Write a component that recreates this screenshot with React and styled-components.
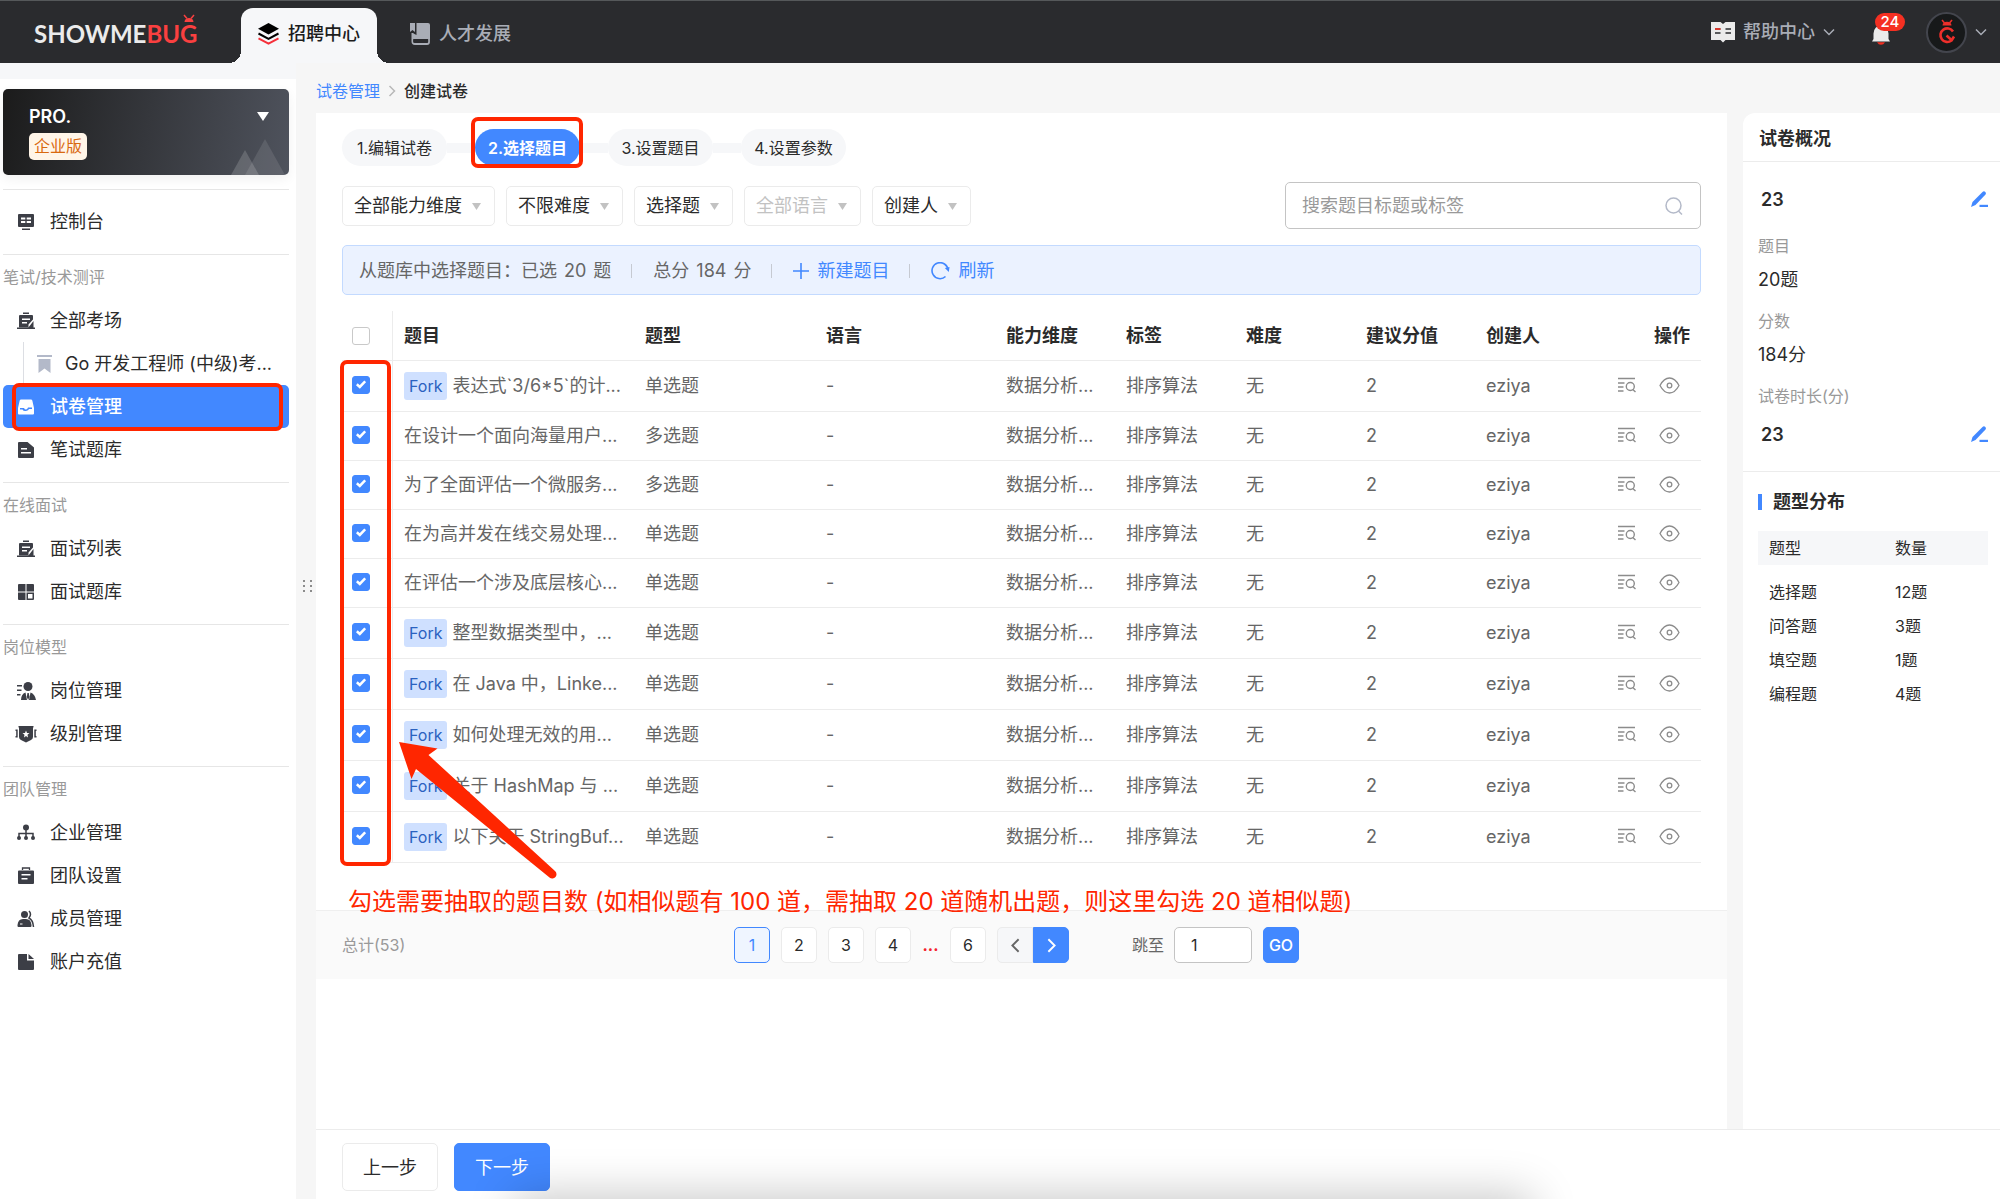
import React from 'react';
import styled, { createGlobalStyle } from 'styled-components';

const GlobalStyle = createGlobalStyle`
*{
  box-sizing: border-box;
}
body{
  margin: 0;
  background-color: #f6f6f6;
  color: #2b2b2b;
  font-family: Inter, "Noto Sans CJK SC", sans-serif;
  font-size: 18px;
  line-height: 24px;
}
button, input, select{
  font-family: inherit;
  font-size: inherit;
  line-height: inherit;
  color: inherit;
  margin: 0;
}
a{
  color: inherit;
  text-decoration: none;
}
h1, h2, p, dl, dd{
  margin: 0;
  font-size: 18px;
}
`;

const Page = styled.div`
display: flex;
flex-direction: column;
min-height: 100vh;
`;

/* ---------- header ---------- */

const Header = styled.header`
display: flex;
height: 63px;
background-color: #2a2b2e;
border-top: 1px solid #55585a;
color: #a9adb6;
`;

const Logo = styled.a`
position: relative;
width: 241px;
flex-shrink: 0;
padding: 17px 0 0 34px;
font-family: Lato, sans-serif;
font-weight: 700;
font-size: 24px;
line-height: 32px;
color: #ebebeb;
`;

const LogoRed = styled.span`
position: relative;
color: #fa4040;
`;

const LogoFeelers = styled.svg`
position: absolute;
right: 0;
top: -5px;
`;

const Tab = styled.a`
position: relative;
display: flex;
align-items: center;
gap: 9px;
margin-top: 7px;
padding: 0 17px 4px;
height: 55px;
font-weight: 500;
border-radius: 12px 12px 0 0;
background-color: ${(p) => (p.$active ? '#f6f7f9' : 'transparent')};
color: ${(p) => (p.$active ? '#1c1c1c' : '#a9adb6')};
margin-right: ${(p) => (p.$active ? '16px' : '0')};

&::before, &::after{
  content: "";
  display: ${(p) => (p.$active ? 'block' : 'none')};
  position: absolute;
  bottom: 0;
  width: 12px;
  height: 12px;
}
&::before{
  right: 100%;
  background: radial-gradient(circle at 0 0, transparent 12px, #f6f7f9 12px);
}
&::after{
  left: 100%;
  background: radial-gradient(circle at 100% 0, transparent 12px, #f6f7f9 12px);
}
`;

const HeaderRight = styled.div`
display: flex;
align-items: center;
margin-left: auto;
padding-right: 13px;
`;

const HeaderButton = styled.button`
display: flex;
align-items: center;
gap: 8px;
padding: 0;
border: none;
background: none;
font-weight: 500;
cursor: pointer;
`;

const BellButton = styled(HeaderButton)`
position: relative;
margin: 0 35px 0 36px;
padding-top: 6px;
`;

const Count = styled.span`
position: absolute;
left: 4px;
top: -6px;
width: 30px;
height: 18px;
border-radius: 9px;
background-color: #f53022;
color: white;
font-size: 15px;
line-height: 18px;
text-align: center;
`;

const Avatar = styled.span`
display: flex;
justify-content: center;
align-items: center;
width: 41px;
height: 41px;
border-radius: 50%;
border: 2px solid #43454d;
background-color: #17191a;
`;

/* ---------- sidebar ---------- */

const Body = styled.div`
display: flex;
flex: 1;
`;

const Sidebar = styled.nav`
display: flex;
flex-direction: column;
width: 296px;
flex-shrink: 0;
padding: 10px 7px 0 3px;
border-top: 16px solid #f6f7f9;
background-color: white;
`;

const Team = styled.div`
position: relative;
display: flex;
flex-direction: column;
align-items: flex-start;
gap: 4px;
height: 86px;
margin-bottom: 14px;
padding: 16px 26px 0;
border-radius: 5px;
background: linear-gradient(100deg, #1b1b1b, #4f535d);
box-shadow: 0 4px 12px rgba(0, 0, 0, 0.06);
color: white;
font-weight: 600;
`;

const TeamBadge = styled.span`
padding: 0 5px;
border-radius: 5px;
background-color: #fff5e8;
color: #d9690f;
font-size: 16px;
font-weight: 400;
line-height: 27px;
`;

const TeamArt = styled.svg`
position: absolute;
right: 0;
top: 0;
`;

const NavGroup = styled.div`
display: flex;
flex-direction: column;
padding: ${(p) => (p.$plain ? '10px 0 11px' : '0 0 11px')};
border-top: 1px solid #e6e6e6;
`;

const NavLabel = styled.div`
font-size: 16px;
line-height: 44px;
color: #999;
`;

const NavItem = styled.a`
position: relative;
display: flex;
align-items: center;
gap: 15px;
height: 43px;
padding: 1px 0 0 14px;
border-radius: 5px;
white-space: nowrap;
background-color: ${(p) => (p.$active ? '#4288ff' : 'transparent')};
color: ${(p) => (p.$active ? 'white' : '#2b2b2b')};
font-weight: ${(p) => (p.$active ? 500 : 400)};

svg{
  flex-shrink: 0;
  overflow: visible;
  color: ${(p) => (p.$active ? 'white' : '#3c3e46')};
}
`;

const NavSubItem = styled.a`
display: flex;
align-items: center;
gap: 13px;
height: 43px;
margin-left: 20px;
padding: 1px 0 0 13px;
border-left: 1px solid #dcdee3;
white-space: nowrap;
color: #2b2b2b;
`;

const Mark = styled.div`
position: absolute;
border: 4px solid #ff2600;
border-radius: 7px;
pointer-events: none;
`;

const NavMark = styled(Mark)`
top: -2px;
bottom: -3px;
left: 9px;
right: 6px;
`;

const Resizer = styled.div`
display: flex;
justify-content: center;
width: 20px;
flex-shrink: 0;
padding: 517px 0 0 3px;
`;

/* ---------- content ---------- */

const Content = styled.main`
display: flex;
flex-direction: column;
flex: 1;
min-width: 0;
`;

const Breadcrumb = styled.div`
display: flex;
align-items: center;
gap: 6px;
height: 50px;
padding-bottom: 6px;
padding-top: 12px;
font-size: 16px;
font-weight: 500;
`;

const Crumb = styled.a`
color: #4288ff;
font-weight: 400;
`;

const Columns = styled.div`
display: flex;
flex: 1;
gap: 16px;
`;

const Panel = styled.section`
flex: 1;
min-width: 0;
padding-top: 16px;
background-color: white;
`;

const PanelInner = styled.div`
padding: 0 26px;
`;

const Steps = styled.div`
display: flex;
align-items: center;
height: 37px;
font-size: 16px;
`;

const Step = styled.a`
position: relative;
width: 105px;
height: 37px;
border-radius: 19px;
line-height: 39px;
text-align: center;
white-space: nowrap;
background-color: ${(p) => (p.$active ? '#4288ff' : '#f6f7f9')};
color: ${(p) => (p.$active ? 'white' : '#2b2b2b')};
font-weight: ${(p) => (p.$active ? 600 : 400)};
`;

const StepLine = styled.div`
width: 28px;
height: 10px;
background-color: #f6f7f9;
`;

const StepMark = styled(Mark)`
top: -12px;
bottom: -2px;
left: -4px;
right: -3px;
`;

const Filters = styled.div`
display: flex;
align-items: center;
gap: 11px;
margin-top: 16px;
`;

const SelectWrap = styled.div`
position: relative;
color: #c2c2c2;

svg{
  position: absolute;
  right: 14px;
  top: 17px;
  pointer-events: none;
}
`;

const Select = styled.select`
appearance: none;
height: 40px;
padding: 0 32px 0 11px;
border: 1px solid #ebebeb;
border-radius: 5px;
background-color: white;
color: #2b2b2b;
opacity: 1;

&:disabled{
  color: #c2c2c2;
}
`;

const Search = styled.label`
display: flex;
align-items: center;
width: 416px;
height: 47px;
margin-left: auto;
padding: 0 17px 0 16px;
border: 1px solid #c4c4c4;
border-radius: 5px;
color: #b4bac9;
`;

const SearchInput = styled.input`
flex: 1;
min-width: 0;
padding: 0;
border: none;
outline: none;
color: #2b2b2b;

&::placeholder{
  color: #999;
  opacity: 1;
}
`;

const Summary = styled.div`
display: flex;
align-items: center;
height: 50px;
margin-top: 16px;
padding: 1px 0 0 16px;
border: 1px solid #c3daff;
border-radius: 5px;
background-color: #ebf2ff;
color: #666;
`;

const Num = styled.span`
margin: 0 7px;
`;

const Divider = styled.span`
width: 1px;
height: 14px;
margin: 0 21px 0 20px;
background-color: #c6cad2;
`;

const LinkButton = styled.button`
display: flex;
align-items: center;
gap: 8px;
padding: 0;
border: none;
background: none;
color: #4288ff;
cursor: pointer;
`;

const TableWrap = styled.div`
position: relative;
margin-top: 16px;
`;

const Table = styled.table`
width: 100%;
table-layout: fixed;
border-collapse: separate;
border-spacing: 0;
`;

const Th = styled.th`
height: 50px;
padding: 0 11px;
border-bottom: 1px solid #ececec;
font-weight: 600;
text-align: ${(p) => p.$align || 'left'};
`;

const Row = styled.tr`
height: ${(p) => (p.$tall ? '51px' : '49px')};
`;

const Td = styled.td`
padding: 0 11px;
border-bottom: 1px solid #ececec;
color: #666;
white-space: nowrap;
`;

const CheckTh = styled(Th)`
padding: 0 0 0 10px;
border-right: 1px solid #ececec;
`;

const CheckTd = styled(Td)`
padding: 0 0 2px 10px;
border-right: 1px solid #ececec;
`;

const CheckLabel = styled.label`
position: relative;
display: block;
width: 18px;
height: 18px;

svg{
  position: absolute;
  left: 4px;
  top: 4px;
  pointer-events: none;
}
`;

const Checkbox = styled.input`
appearance: none;
display: block;
width: 18px;
height: 18px;
margin: 0;
border: 1px solid #c9c9c9;
border-radius: 3px;
background-color: white;

&:checked{
  border-color: #4288ff;
  background-color: #4288ff;
}
`;

const Fork = styled.span`
display: inline-block;
margin-right: 5px;
padding: 0 5px;
border-radius: 3px;
background-color: #cfe0ff;
color: #2a62c0;
font-size: 16px;
line-height: 28px;
`;

const Actions = styled.div`
display: flex;
justify-content: flex-end;
gap: 22px;
padding-right: 10px;
`;

const IconButton = styled.button`
display: flex;
padding: 0;
border: none;
background: none;
color: ${(p) => (p.$blue ? '#4288ff' : '#8c8c8c')};
cursor: pointer;
`;

const TableMark = styled(Mark)`
top: 49px;
bottom: -3px;
left: -2px;
width: 51px;
`;

const Arrow = styled.svg`
position: absolute;
left: 57px;
top: 431px;
pointer-events: none;
`;

const Note = styled.p`
position: absolute;
left: 6px;
top: 573px;
font-size: 24px;
line-height: 36px;
white-space: nowrap;
color: #ff2600;
`;

const Pager = styled.div`
display: flex;
align-items: center;
height: 69px;
margin-top: 47px;
padding: 0 36px 0 26px;
border-top: 1px solid #efefef;
background-color: #fafafa;
font-size: 16px;
`;

const Total = styled.span`
flex: 1;
color: #999;
`;

const Pages = styled.div`
display: flex;
align-items: center;
gap: 11px;
`;

const PageButton = styled.button`
width: 36px;
height: 36px;
padding: 0;
border: 1px solid ${(p) => (p.$active ? '#4288ff' : '#ebebeb')};
border-radius: 5px;
background-color: ${(p) => (p.$active ? '#eff5ff' : 'white')};
color: ${(p) => (p.$active ? '#4288ff' : '#2b2b2b')};
`;

const Dots = styled.span`
width: 17px;
font-weight: 700;
text-align: center;
color: #f5222d;
`;

const Arrows = styled.div`
display: flex;
`;

const ArrowButton = styled.button`
display: flex;
justify-content: center;
align-items: center;
width: 36px;
height: 36px;
padding: 0;
border: 1px solid ${(p) => (p.$next ? '#4288ff' : '#ebebeb')};
border-radius: ${(p) => (p.$next ? '0 5px 5px 0' : '5px 0 0 5px')};
background-color: ${(p) => (p.$next ? '#4288ff' : '#f6f7f9')};
color: ${(p) => (p.$next ? 'white' : '#666')};
`;

const Jump = styled.label`
display: flex;
align-items: center;
gap: 10px;
margin-left: 52px;
color: #666;
`;

const JumpInput = styled.input`
width: 78px;
height: 36px;
padding: 0 16px;
border: 1px solid #c4c4c4;
border-radius: 5px;
background-color: white;
color: #2b2b2b;
`;

const GoButton = styled(PageButton)`
border-color: #4288ff;
background-color: #4288ff;
color: white;
font-weight: 500;
`;

const Spacer = styled.span`
flex: 1;
`;

/* ---------- overview ---------- */

const Aside = styled.aside`
width: 257px;
flex-shrink: 0;
border-top-left-radius: 12px;
background-color: white;
`;

const AsideTitle = styled.h1`
padding: 3px 16px 0;
border-bottom: 1px solid #ececec;
font-weight: 600;
line-height: 45px;
`;

const Facts = styled.dl`
padding: 15px 12px 14px 15px;
border-bottom: 1px solid #ececec;
`;

const FactLabel = styled.dt`
font-size: 16px;
line-height: 32px;
padding-top: 8px;
color: #999;
`;

const FactValue = styled.dd`
display: flex;
justify-content: space-between;
align-items: center;
height: ${(p) => (p.$editable ? '45px' : '35px')};
padding-left: ${(p) => (p.$editable ? '3px' : '0')};
font-weight: ${(p) => (p.$editable ? 600 : 400)};
`;

const TypeTitle = styled.h2`
display: flex;
align-items: center;
gap: 11px;
margin: 18px 0 17px 15px;
font-weight: 600;

&::before{
  content: "";
  width: 4px;
  height: 16px;
  background-color: #4288ff;
}
`;

const TypeTable = styled.table`
width: 230px;
margin-left: 15px;
table-layout: fixed;
border-spacing: 0;
font-size: 16px;

th{
  height: 34px;
  padding: 0 11px;
  background-color: #f6f7f9;
  font-weight: 400;
  text-align: left;
}
td{
  height: 34px;
  padding: 0 11px;
}
tbody::before{
  content: "";
  display: block;
  height: 10px;
}
`;

/* ---------- footer ---------- */

const Footer = styled.footer`
position: relative;
display: flex;
gap: 16px;
padding: 13px 26px 8px;
border-top: 1px solid #ececec;
background-color: white;
overflow: hidden;

&::after{
  content: "";
  position: absolute;
  top: 100%;
  left: 12%;
  right: 28%;
  height: 60px;
  box-shadow: 0 0 46px 4px rgba(0, 0, 0, 0.22);
  pointer-events: none;
}
`;

const FooterButton = styled.button`
width: 96px;
height: 48px;
padding: 2px 0 0;
border: 1px solid ${(p) => (p.$primary ? '#4288ff' : '#ebebeb')};
border-radius: 5px;
background-color: ${(p) => (p.$primary ? '#4288ff' : 'white')};
color: ${(p) => (p.$primary ? 'white' : '#2b2b2b')};
`;

/* ---------- icons ---------- */

const Svg = ({ size = 18, children, ...rest }) => (
    <svg width={size} height={size} viewBox="0 0 18 18" fill="currentColor" aria-hidden="true" {...rest}>
        {children}
    </svg>
);

const icons = {
    console: (
        <Svg>
            <path fillRule="evenodd" d="M2 1h14q1 0 1 1v11q0 1-1 1H2q-1 0-1-1V2q0-1 1-1zM4 4.500v2h4.300v-2zM9.700 4.500v2H14v-2zM4 8v2h4.300V8zM9.700 8v2H14V8z" />
            <path d="M5 15.500h8V17H5z" />
        </Svg>
    ),
    exam: (
        <Svg>
            <path d="M6 .5h6V2H6zM0 15.500h18V17H0z" />
            <path fillRule="evenodd" d="M3 3h12q1 0 1 1v3.500L11.500 12.500V15.500H2V4q0-1 1-1zM5 6.500V8h8V6.500zM5 10v1.500h5V10z" />
            <path d="M16.500 9v7h-5.500z" />
        </Svg>
    ),
    paper: (
        <Svg>
            <path fillRule="evenodd" d="M4 1.500h10q1 0 1.300 1L17 10v5.500q0 1-1 1H2q-1 0-1-1V10l1.700-7.500q.3-1 1.300-1zM3 10v1.500h2.500q1 2 3.500 1.500t3-2H15V9.500h-4q-.6 2-2 2T7 10z" />
        </Svg>
    ),
    bank: (
        <Svg>
            <path fillRule="evenodd" d="M2 1h8.500L17 6.500V16q0 1-1 1H2q-1 0-1-1V2q0-1 1-1zM4 7v1.500h6V7zM4 11v1.500h10V11z" />
        </Svg>
    ),
    grid: (
        <Svg>
            <path fillRule="evenodd" d="M2 1h6.500v7.500H1V2q0-1 1-1zM9.500 1H16q1 0 1 1v6.500H9.500zM1 9.500h7.500V17H2q-1 0-1-1zM9.500 9.500H17V16q0 1-1 1H9.500zM11 11v4.500h4.500V11z" />
        </Svg>
    ),
    post: (
        <Svg>
            <circle cx="11" cy="4.500" r="4.500" />
            <path d="M0 3h5v1.500H0zM0 7.500h4.500V9H0zM0 12h3.500v1.500H0z" />
            <path d="M8.500 10.500 10 18H4q0-6 4.500-7.500zM13.500 10.500 12 18h7q-1-6-5.500-7.500zM10.400 11h1.400l.6 4-1.300 3-1.300-3z" />
        </Svg>
    ),
    level: (
        <Svg>
            <path fillRule="evenodd" d="M1.500 1h15v1.500H16V12q0 2-2 3l-5 2.500L4 15q-2-1-2-3V2.500h-.5zM9 5.500 8 8H5.500l2 1.800L7 12.500l2-1.400 2 1.400-.5-2.700 2-1.800H10z" />
            <path d="M-1.500 4.500h2.200v8h-2.200V11h.7V6h-.7zM17.300 4.500h2.200V6h-.7v5h.7v1.500h-2.200z" />
        </Svg>
    ),
    org: (
        <Svg>
            <circle cx="9" cy="3.500" r="3" />
            <circle cx="2" cy="14" r="2" />
            <circle cx="9" cy="14" r="2" />
            <circle cx="16" cy="14" r="2" />
            <path d="M2 13V9.500h14V13M9 5v9" fill="none" stroke="currentColor" strokeWidth="1.500" />
        </Svg>
    ),
    team: (
        <Svg>
            <path d="M5.500 3V1h7v2" fill="none" stroke="currentColor" strokeWidth="1.300" />
            <path fillRule="evenodd" d="M2 3.500h14q1 0 1 1V16q0 1-1 1H2q-1 0-1-1V4.500q0-1 1-1zM4.500 7v1.500h9V7zM4.500 11v1.500h6V11z" />
        </Svg>
    ),
    member: (
        <Svg>
            <circle cx="7.500" cy="4.500" r="3.500" />
            <path fillRule="evenodd" d="M6 9h3q5 0 5.500 6v1q0 1-1 1h-12q-1 0-1-1v-1Q1 9 6 9zM3 14.500h2.500v-1H3z" />
            <path d="M12 1q3 3 0 7 4 2 4.500 9" fill="none" stroke="currentColor" strokeWidth="1.500" />
        </Svg>
    ),
    bill: (
        <Svg>
            <path d="M2 1h8v6.500h7V16q0 1-1 1H2q-1 0-1-1V2q0-1 1-1z" />
            <path d="M11.500 1 17 6h-5.500z" />
        </Svg>
    ),
};

const BookmarkIcon = () => (
    <svg width="15" height="18" viewBox="0 0 15 18" fill="#b3b9c9" aria-hidden="true">
        <path d="M0 0h15v2H0zM1.500 4h12v14l-6-4.500-6 4.500z" />
    </svg>
);

const LayersIcon = () => (
    <svg width="21" height="22" viewBox="0 0 21 22" fill="none" aria-hidden="true">
        <path d="M10.500 0 21 5.700 10.500 11.500 0 5.700z" fill="black" />
        <path d="M.5 10.500l10 5.300 10-5.300" stroke="black" strokeWidth="2" />
        <path d="M.5 15.300l10 5.300 10-5.300" stroke="#f5303a" strokeWidth="2" />
    </svg>
);

const BookIcon = () => (
    <svg width="20" height="22" viewBox="0 0 20 22" fill="#a9adb6" aria-hidden="true">
        <path d="M6.500 0H18q2 0 2 2v14H3.500q-1 0-1-1v-5L6.500 12z" />
        <path d="M0 0h5v9L2.500 7 0 9z" />
        <path d="M2.400 10v8.500q0 2.500 2.500 2.500H17q2 0 2-2v-5" fill="none" stroke="#a9adb6" strokeWidth="1.800" />
        <path d="M3.300 16.500h14.800v3H3.300z" fill="#2a2b2e" />
    </svg>
);

const HelpIcon = () => (
    <svg width="24" height="22" viewBox="0 0 24 22" aria-hidden="true">
        <path d="M0 1h9.500L12 3l2.500-2H24v18h-9.500L12 21.500 9.500 19H0z" fill="#ebebeb" />
        <path d="M4 8h5.500M14.500 8H20M14.500 12H20M4 12h5.500" stroke="#2a2b2e" strokeWidth="1.600" />
        <path d="M4 8h5.500" stroke="#f53022" strokeWidth="1.600" />
    </svg>
);

const BellIcon = () => (
    <svg width="20" height="20" viewBox="0 0 20 20" aria-hidden="true">
        <path d="M2.500 14V8.500a7 7.500 0 0 1 15 0V14l1.500 2.500H1z" fill="#ebebeb" />
        <path d="M6 17.200h8q-1.500 2.600-4 2.600t-4-2.600z" fill="#f53022" />
    </svg>
);

const BugIcon = () => (
    <svg width="18" height="26" viewBox="0 0 18 26" fill="none" stroke="#ee2f2b" aria-hidden="true">
        <path d="M4 1l2.500 3M14 1l-2.500 3" strokeWidth="1.500" />
        <path d="M4.500 6.500a4.500 3.800 0 0 1 9 0z" fill="#ee2f2b" stroke="none" />
        <path d="M15 12.500A6.800 6.800 0 1 0 13.500 21.500L16 17.500" strokeWidth="2.600" />
        <path d="M8.500 16.500l5 4.500" strokeWidth="2.600" />
    </svg>
);

const Chevron = ({ dir = 'down', width = 12, color = 'currentColor', stroke = 1.5 }) => {
    const paths = { down: 'M1 3.500l5 5 5-5', right: 'M3.500 1l5 5-5 5', left: 'M8.500 1l-5 5 5 5' };
    return (
        <svg width={width} height={width} viewBox="0 0 12 12" fill="none" stroke={color} strokeWidth={stroke} aria-hidden="true">
            <path d={paths[dir]} />
        </svg>
    );
};

const Caret = () => (
    <svg width="9" height="7" viewBox="0 0 9 7" fill="currentColor" aria-hidden="true">
        <path d="M0 0h9L4.500 7z" />
    </svg>
);

const ViewIcon = () => (
    <svg width="19" height="16" viewBox="0 0 19 16" fill="none" stroke="currentColor" strokeWidth="1.400" aria-hidden="true">
        <path d="M0 1.500h17M0 6h6.500M0 10h5.500M0 14h5.500" />
        <circle cx="12.300" cy="9.500" r="4" />
        <path d="M14.800 12.500l2.700 2.500" />
    </svg>
);

const EyeIcon = () => (
    <svg width="21" height="18" viewBox="0 0 21 18" fill="none" stroke="currentColor" strokeWidth="1.300" aria-hidden="true">
        <path d="M1 8.500Q5 1 10.500 1T20 8.500Q16 16 10.500 16T1 8.500z" />
        <circle cx="10.500" cy="8.500" r="2.300" />
    </svg>
);

const EditIcon = () => (
    <svg width="17" height="17" viewBox="0 0 17 17" fill="currentColor" aria-hidden="true">
        <path d="M11.500 1q1.500-1.300 2.800 0t0 2.800L4.500 14 0 16l1.500-5z" />
        <path d="M8.500 13.800H17V16H8.500z" />
    </svg>
);

/* ---------- data ---------- */

const navGroups = [
    { items: [{ icon: 'console', text: '控制台' }] },
    {
        label: '笔试/技术测评',
        items: [
            { icon: 'exam', text: '全部考场' },
            { sub: true, text: 'Go 开发工程师 (中级)考...' },
            { icon: 'paper', text: '试卷管理', active: true },
            { icon: 'bank', text: '笔试题库' },
        ],
    },
    {
        label: '在线面试',
        items: [
            { icon: 'exam', text: '面试列表' },
            { icon: 'grid', text: '面试题库' },
        ],
    },
    {
        label: '岗位模型',
        items: [
            { icon: 'post', text: '岗位管理' },
            { icon: 'level', text: '级别管理' },
        ],
    },
    {
        label: '团队管理',
        items: [
            { icon: 'org', text: '企业管理' },
            { icon: 'team', text: '团队设置' },
            { icon: 'member', text: '成员管理' },
            { icon: 'bill', text: '账户充值' },
        ],
    },
];

const steps = ['1.编辑试卷', '2.选择题目', '3.设置题目', '4.设置参数'];

const filters = [
    { text: '全部能力维度' },
    { text: '不限难度' },
    { text: '选择题' },
    { text: '全部语言', disabled: true },
    { text: '创建人' },
];

const columns = [51, 241, 181, 180, 120, 120, 120, 120, 120, 106];

const questions = [
    { fork: true, title: '表达式`3/6*5`的计...', type: '单选题' },
    { title: '在设计一个面向海量用户...', type: '多选题' },
    { title: '为了全面评估一个微服务...', type: '多选题' },
    { title: '在为高并发在线交易处理...', type: '单选题' },
    { title: '在评估一个涉及底层核心...', type: '单选题' },
    { fork: true, title: '整型数据类型中，...', type: '单选题' },
    { fork: true, title: '在 Java 中，Linke...', type: '单选题' },
    { fork: true, title: '如何处理无效的用...', type: '单选题' },
    { fork: true, title: '关于 HashMap 与 ...', type: '单选题' },
    { fork: true, title: '以下关于 StringBuf...', type: '单选题' },
];

const distribution = [
    ['选择题', '12题'],
    ['问答题', '3题'],
    ['填空题', '1题'],
    ['编程题', '4题'],
];

/* ---------- parts ---------- */

const TopBar = () => (
    <Header>
        <Logo href="#">
            SHOWME<LogoRed>BUG
                <LogoFeelers width="16" height="14" viewBox="0 0 16 14" fill="none" stroke="#fa4040" strokeWidth="1.500">
                    <path d="M3 1l3 3.500M13 1l-3 3.500" />
                    <path d="M3.500 8a4.500 4 0 0 1 9 0z" fill="#fa4040" stroke="none" />
                </LogoFeelers>
            </LogoRed>
        </Logo>
        <Tab href="#" $active><LayersIcon />招聘中心</Tab>
        <Tab href="#"><BookIcon />人才发展</Tab>
        <HeaderRight>
            <HeaderButton><HelpIcon />帮助中心<Chevron /></HeaderButton>
            <BellButton aria-label="通知"><BellIcon /><Count>24</Count></BellButton>
            <HeaderButton aria-label="账户"><Avatar><BugIcon /></Avatar><Chevron /></HeaderButton>
        </HeaderRight>
    </Header>
);

const SideNav = () => (
    <Sidebar>
        <Team>
            PRO.
            <TeamBadge>企业版</TeamBadge>
            <TeamArt width="60" height="86" viewBox="0 0 60 86" aria-hidden="true">
                <path d="M28 23h12l-6 9z" fill="white" />
                <path d="M36 50 56 86H16z" fill="white" fillOpacity="0.1" />
                <path d="M16 61 30 86H2z" fill="white" fillOpacity="0.16" />
            </TeamArt>
        </Team>
        {navGroups.map((group, i) => (
            <NavGroup key={i} $plain={!group.label}>
                {group.label && <NavLabel>{group.label}</NavLabel>}
                {group.items.map((item) =>
                    item.sub ? (
                        <NavSubItem href="#" key={item.text}><BookmarkIcon />{item.text}</NavSubItem>
                    ) : (
                        <NavItem href="#" key={item.text} $active={item.active}>
                            {icons[item.icon]}
                            {item.text}
                            {item.active && <NavMark />}
                        </NavItem>
                    )
                )}
            </NavGroup>
        ))}
    </Sidebar>
);

const Check = ({ label, checked }) => (
    <CheckLabel>
        <Checkbox type="checkbox" defaultChecked={checked} aria-label={label} />
        {checked && (
            <svg width="10" height="9" viewBox="0 0 10 9" fill="none" stroke="white" strokeWidth="2.600" aria-hidden="true">
                <path d="M.8 4.300l3 2.700L9.200 1.300" />
            </svg>
        )}
    </CheckLabel>
);

const QuestionTable = () => (
    <TableWrap>
        <Table>
            <colgroup>
                {columns.map((w, i) => <col key={i} width={w} />)}
            </colgroup>
            <thead>
                <tr>
                    <CheckTh><Check label="全选" /></CheckTh>
                    <Th>题目</Th>
                    <Th>题型</Th>
                    <Th>语言</Th>
                    <Th>能力维度</Th>
                    <Th>标签</Th>
                    <Th>难度</Th>
                    <Th>建议分值</Th>
                    <Th>创建人</Th>
                    <Th $align="right">操作</Th>
                </tr>
            </thead>
            <tbody>
                {questions.map((q) => (
                    <Row key={q.title} $tall={q.fork}>
                        <CheckTd><Check label={q.title} checked /></CheckTd>
                        <Td>{q.fork && <Fork>Fork</Fork>}{q.title}</Td>
                        <Td>{q.type}</Td>
                        <Td>-</Td>
                        <Td>数据分析...</Td>
                        <Td>排序算法</Td>
                        <Td>无</Td>
                        <Td>2</Td>
                        <Td>eziya</Td>
                        <Td>
                            <Actions>
                                <IconButton aria-label="详情"><ViewIcon /></IconButton>
                                <IconButton aria-label="预览"><EyeIcon /></IconButton>
                            </Actions>
                        </Td>
                    </Row>
                ))}
            </tbody>
        </Table>
        <TableMark />
        <Arrow width="158" height="140" viewBox="0 0 158 140" fill="#ff2600" aria-hidden="true">
            <path d="M0 0l38.500 6.500-9 6.500L156 129a4 4 0 0 1-5.500 6.500L17 27l-4.500 10z" />
        </Arrow>
        <Note>勾选需要抽取的题目数 (如相似题有 100 道，需抽取 20 道随机出题，则这里勾选 20 道相似题)</Note>
    </TableWrap>
);

const Pagination = () => (
    <Pager>
        <Total>总计(53)</Total>
        <Pages>
            <PageButton $active>1</PageButton>
            <PageButton>2</PageButton>
            <PageButton>3</PageButton>
            <PageButton>4</PageButton>
            <Dots>...</Dots>
            <PageButton>6</PageButton>
            <Arrows>
                <ArrowButton aria-label="上一页"><Chevron dir="left" width={15} /></ArrowButton>
                <ArrowButton aria-label="下一页" $next><Chevron dir="right" width={15} /></ArrowButton>
            </Arrows>
            <Jump>
                跳至
                <JumpInput defaultValue="1" />
            </Jump>
            <GoButton>GO</GoButton>
        </Pages>
        <Spacer />
    </Pager>
);

const Overview = () => (
    <Aside>
        <AsideTitle>试卷概况</AsideTitle>
        <Facts>
            <FactValue $editable>23<IconButton $blue aria-label="编辑名称"><EditIcon /></IconButton></FactValue>
            <FactLabel>题目</FactLabel>
            <FactValue>20题</FactValue>
            <FactLabel>分数</FactLabel>
            <FactValue>184分</FactValue>
            <FactLabel>试卷时长(分)</FactLabel>
            <FactValue $editable>23<IconButton $blue aria-label="编辑时长"><EditIcon /></IconButton></FactValue>
        </Facts>
        <TypeTitle>题型分布</TypeTitle>
        <TypeTable>
            <colgroup>
                <col width="126" />
                <col />
            </colgroup>
            <thead>
                <tr><th>题型</th><th>数量</th></tr>
            </thead>
            <tbody>
                {distribution.map(([type, count]) => (
                    <tr key={type}><td>{type}</td><td>{count}</td></tr>
                ))}
            </tbody>
        </TypeTable>
    </Aside>
);

const App = () => {
    return (
        <Page>
            <GlobalStyle />
            <TopBar />
            <Body>
                <SideNav />
                <Resizer>
                    <svg width="10" height="12" viewBox="0 0 10 12" fill="#8c8c8c" aria-hidden="true">
                        <path d="M0 0h2v2H0zM7 0h2v2H7zM0 5h2v2H0zM7 5h2v2H7zM0 10h2v2H0zM7 10h2v2H7z" />
                    </svg>
                </Resizer>
                <Content>
                    <Breadcrumb>
                        <Crumb href="#">试卷管理</Crumb>
                        <Chevron dir="right" width={12} color="#b8b8b8" />
                        创建试卷
                    </Breadcrumb>
                    <Columns>
                        <Panel>
                            <PanelInner>
                                <Steps>
                                    {steps.map((step, i) => (
                                        <React.Fragment key={step}>
                                            {i > 0 && <StepLine />}
                                            <Step href="#" $active={i === 1}>
                                                {step}
                                                {i === 1 && <StepMark />}
                                            </Step>
                                        </React.Fragment>
                                    ))}
                                </Steps>
                                <Filters>
                                    {filters.map((f) => (
                                        <SelectWrap key={f.text}>
                                            <Select aria-label={f.text} disabled={f.disabled}>
                                                <option>{f.text}</option>
                                            </Select>
                                            <Caret />
                                        </SelectWrap>
                                    ))}
                                    <Search>
                                        <SearchInput type="text" placeholder="搜索题目标题或标签" />
                                        <svg width="18" height="18" viewBox="0 0 18 18" fill="none" stroke="currentColor" strokeWidth="1.500">
                                            <circle cx="8.500" cy="8.500" r="7.500" />
                                            <path d="M13.500 14l3.500 3.500" />
                                        </svg>
                                    </Search>
                                </Filters>
                                <Summary>
                                    从题库中选择题目：已选<Num>20</Num>题
                                    <Divider />
                                    总分<Num>184</Num>分
                                    <Divider />
                                    <LinkButton>
                                        <svg width="16" height="16" viewBox="0 0 16 16" stroke="currentColor" strokeWidth="1.600">
                                            <path d="M8 0v16M0 8h16" />
                                        </svg>
                                        新建题目
                                    </LinkButton>
                                    <Divider />
                                    <LinkButton>
                                        <svg width="19" height="18" viewBox="0 0 19 18" fill="none" stroke="currentColor" strokeWidth="1.600">
                                            <path d="M14.500 14.500A8 8 0 1 1 17 8" />
                                            <path d="M13.800 6l4.700-1-.7 5z" fill="currentColor" stroke="none" />
                                        </svg>
                                        刷新
                                    </LinkButton>
                                </Summary>
                                <QuestionTable />
                            </PanelInner>
                            <Pagination />
                        </Panel>
                        <Overview />
                    </Columns>
                    <Footer>
                        <FooterButton>上一步</FooterButton>
                        <FooterButton $primary>下一步</FooterButton>
                    </Footer>
                </Content>
            </Body>
        </Page>
    );
};

export default App;
